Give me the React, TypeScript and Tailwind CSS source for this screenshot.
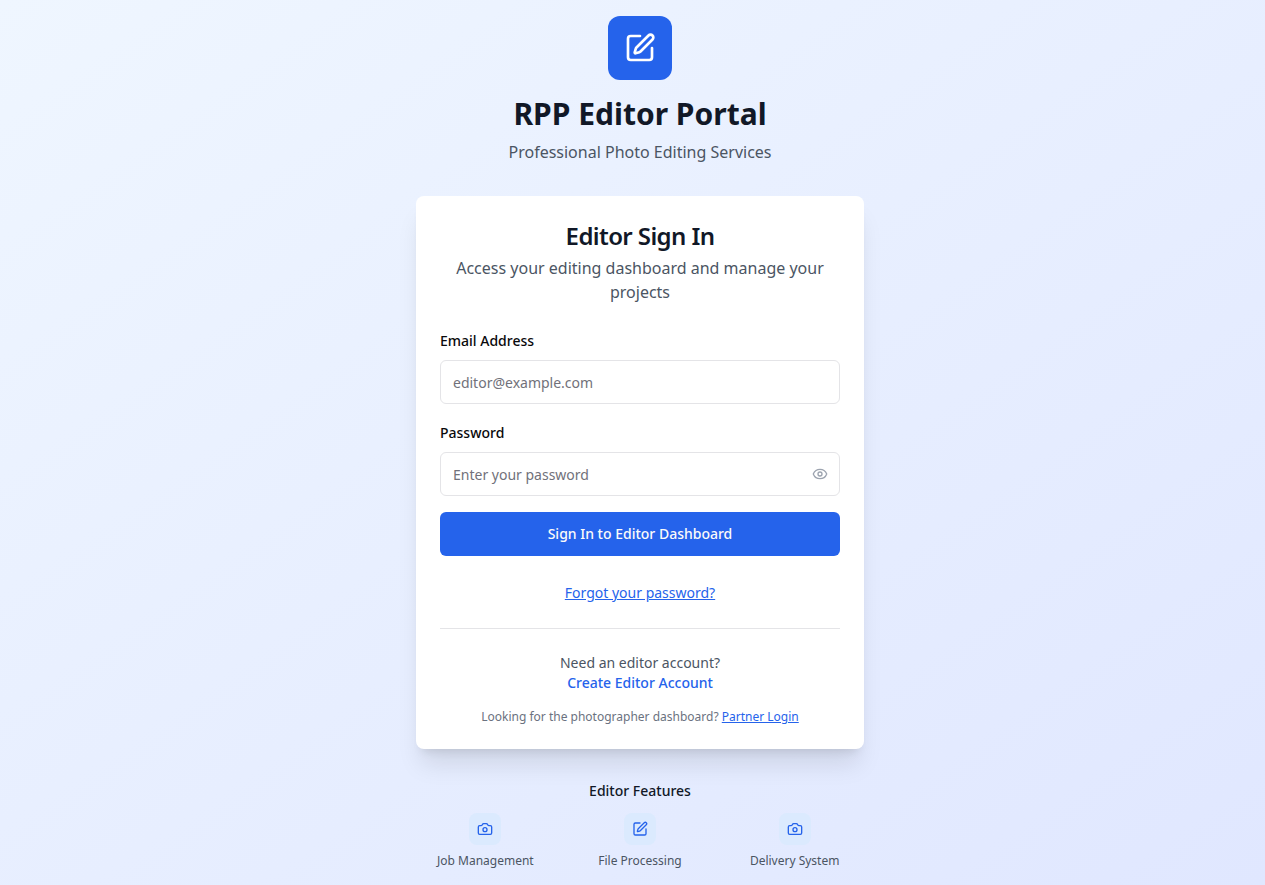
import { useState } from "react";
import type { ReactNode } from "react";
import { Camera, Eye, EyeOff, SquarePen } from "lucide-react";

type FieldProps = {
  id: string;
  label: string;
  type: string;
  placeholder: string;
  children?: ReactNode;
};

function Field({ id, label, type, placeholder, children }: FieldProps) {
  return (
    <div className="flex flex-col gap-2">
      <div>
        <label htmlFor={id} className="text-sm font-medium text-[#09090b]">
          {label}
        </label>
      </div>
      <div className="relative">
        <input
          id={id}
          type={type}
          placeholder={placeholder}
          className="h-11 w-full rounded-md border border-[#e4e4e7] bg-white px-3 py-2 text-sm text-[#09090b] placeholder:text-[#71717a]"
        />
        {children}
      </div>
    </div>
  );
}

const features = [
  { label: "Job Management", Icon: Camera },
  { label: "File Processing", Icon: SquarePen },
  { label: "Delivery System", Icon: Camera },
];

export default function App() {
  const [visible, setVisible] = useState(false);

  return (
    <main className="flex min-h-screen items-center justify-center bg-linear-to-br/srgb from-[#eff6ff] to-[#e0e7ff] py-4 pr-4 pl-[31px] font-['Noto_Sans',sans-serif]">
      <div className="w-full max-w-md">
        <header className="mb-8 text-center">
          <div className="mx-auto mb-4 flex size-16 items-center justify-center rounded-xl bg-[#2563eb]">
            <SquarePen className="size-8 text-white" />
          </div>
          <h1 className="text-3xl font-bold text-[#111827]">RPP Editor Portal</h1>
          <p className="mt-2 text-base text-[#4b5563]">Professional Photo Editing Services</p>
        </header>

        <section className="rounded-lg bg-white shadow-xl">
          <div className="flex flex-col gap-1 p-6 text-center">
            <h2 className="text-2xl font-semibold tracking-tight text-[#111827]">Editor Sign In</h2>
            <p className="text-base text-[#4b5563]">
              Access your editing dashboard and manage your projects
            </p>
          </div>

          <div className="px-6 pb-6">
            <form className="flex flex-col gap-4" onSubmit={(e) => e.preventDefault()}>
              <Field id="email" label="Email Address" type="email" placeholder="editor@example.com" />
              <Field
                id="password"
                label="Password"
                type={visible ? "text" : "password"}
                placeholder="Enter your password"
              >
                <button
                  type="button"
                  aria-label={visible ? "Hide password" : "Show password"}
                  onClick={() => setVisible(!visible)}
                  className="absolute inset-y-0 right-3 flex items-center text-[#9ca3af]"
                >
                  {visible ? <EyeOff className="size-4" /> : <Eye className="size-4" />}
                </button>
              </Field>
              <button
                type="submit"
                className="h-11 w-full rounded-md bg-[#2563eb] text-sm font-medium text-[#fafafa]"
              >
                Sign In to Editor Dashboard
              </button>
            </form>

            <div className="mt-6 text-center">
              <a href="#forgot" className="text-sm text-[#2563eb] underline">
                Forgot your password?
              </a>
            </div>

            <div className="mt-6 border-t border-[#e4e4e7] pt-6 text-center">
              <p className="text-sm text-[#4b5563]">Need an editor account?</p>
              <p className="text-sm">
                <a href="#register" className="font-medium text-[#2563eb]">
                  Create Editor Account
                </a>
              </p>
              <p className="mt-4 text-xs text-[#6b7280]">
                Looking for the photographer dashboard?{" "}
                <a href="#partner" className="text-[#2563eb] underline">
                  Partner Login
                </a>
              </p>
            </div>
          </div>
        </section>

        <section className="mt-8 text-center">
          <h3 className="mb-3 text-sm font-medium text-[#111827]">Editor Features</h3>
          <ul className="grid grid-cols-3 gap-4">
            {features.map(({ label, Icon }) => (
              <li key={label} className="flex flex-col items-center gap-2">
                <div className="flex size-8 items-center justify-center rounded-lg bg-[#dbeafe]">
                  <Icon className="size-4 text-[#2563eb]" />
                </div>
                <span className="text-xs text-[#4b5563]">{label}</span>
              </li>
            ))}
          </ul>
        </section>
      </div>
    </main>
  );
}
